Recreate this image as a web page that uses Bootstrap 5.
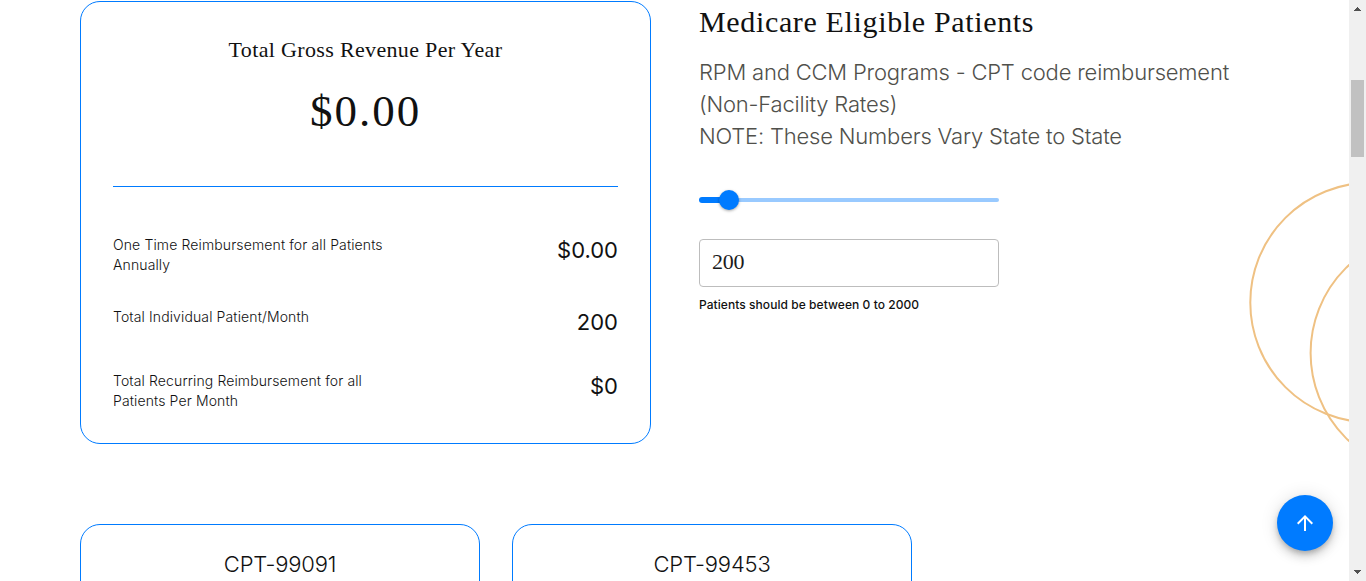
<!DOCTYPE html>
<html lang="en">
<head>
<meta charset="utf-8">
<meta name="viewport" content="width=device-width, initial-scale=1">
<title>Medicare Eligible Patients</title>
<link href="https://cdn.jsdelivr.net/npm/bootstrap@5.3.0/dist/css/bootstrap.min.css" rel="stylesheet">
<style>
body{height:581px;font-family:Inter,sans-serif;font-weight:300;color:#111}
.page-view{min-width:0;padding:1px 0 0 80px}
.serif{font-family:"Liberation Serif",serif;font-weight:400}
.outline-card{--bs-card-border-color:#007bff;--bs-card-border-radius:20px;--bs-card-bg:#fff;color:inherit}
.revenue{width:571px;height:443px;padding:32px}
.revenue-title{font-size:22px;line-height:32px;letter-spacing:.34px}
.revenue-total{font-size:45px;line-height:56px;letter-spacing:2px;margin-top:17px}
.rule{height:1px;background:#007bff;margin-top:47px}
.figures{margin-top:48px}
.figure-label{font-size:14px;line-height:20px;width:290px;letter-spacing:.125px}
.figure-value{font-size:22px;line-height:32px;font-weight:400;margin-top:-1px;margin-bottom:1px}
.calc{width:560px;margin-left:48px}
.calc-title{font-size:30px;line-height:40px;letter-spacing:.65px;padding-top:1px}
.calc-text{font-size:22px;line-height:32px;letter-spacing:-.19px;color:#50504b;margin-top:14px}
.slider{width:300px;height:20px;margin-top:38px}
.slider-fill{width:30px;height:6px;border-radius:3px;background:#007bff}
.slider-rest{height:4px;border-radius:0 2px 2px 0;background:#99caff}
.slider-thumb{width:20px;height:20px;margin:0 -10px;background:#007bff;z-index:1;box-shadow:0 1px 3px rgba(0,0,0,.35)}
.patients{width:300px;height:48px;margin-top:29px;padding:0 12px 2px;font-family:"Liberation Serif",serif;font-size:22px;letter-spacing:-.2px;color:#1b1b1b;border-color:#bdbdbd;border-radius:4px;font-weight:400}
.hint{font-size:12px;line-height:16px;font-weight:500;letter-spacing:.06px;margin-top:10px}
.codes{margin-top:80px;gap:32px}
.code-card{width:400px;height:300px;padding-top:23px;font-size:22px;line-height:32px;letter-spacing:-.2px}
.rings{right:0;top:180px}
.to-top{width:56px;height:56px;left:1277px;top:495px;background:#007bff;box-shadow:0 3px 5px -1px rgba(0,0,0,.2),0 6px 10px rgba(0,0,0,.14),0 1px 18px rgba(0,0,0,.12)}
.scroller{width:17px;background:#f0f0f0}
.scroller-thumb{width:13px;height:77px;background:#c1c1c1;margin:0 2px}
</style>
</head>
<body class="d-flex overflow-hidden bg-white">
<main class="page-view flex-grow-1 position-relative overflow-hidden">
  <svg class="rings position-absolute" width="101" height="264" viewBox="1248 180 101 264" fill="none" stroke="#efc183" stroke-width="2"><circle cx="1370" cy="302.5" r="119.7"/><circle cx="1430.6" cy="353" r="120"/></svg>
  <div class="d-flex align-items-start">
    <section class="card outline-card revenue">
      <h2 class="serif revenue-title text-center mb-0">Total Gross Revenue Per Year</h2>
      <div class="serif revenue-total text-center">$0.00</div>
      <div class="rule"></div>
      <div class="figures d-flex flex-column gap-4">
        <div class="d-flex justify-content-between pb-2"><div class="figure-label">One Time Reimbursement for all Patients Annually</div><div class="figure-value">$0.00</div></div>
        <div class="d-flex justify-content-between pb-2"><div class="figure-label">Total Individual Patient/Month</div><div class="figure-value">200</div></div>
        <div class="d-flex justify-content-between"><div class="figure-label">Total Recurring Reimbursement for all Patients Per Month</div><div class="figure-value">$0</div></div>
      </div>
    </section>
    <section class="calc">
      <h1 class="serif calc-title mb-0">Medicare Eligible Patients</h1>
      <p class="calc-text mb-0">RPM and CCM Programs - CPT code reimbursement (Non-Facility Rates)<br>NOTE: These Numbers Vary State to State</p>
      <div class="slider d-flex align-items-center"><div class="slider-fill"></div><div class="slider-thumb rounded-circle flex-shrink-0"></div><div class="slider-rest flex-grow-1"></div></div>
      <input class="form-control patients" type="text" value="200" aria-label="Patients">
      <div class="hint">Patients should be between 0 to 2000</div>
    </section>
  </div>
  <div class="codes d-flex">
    <div class="card outline-card code-card text-center">CPT-99091</div>
    <div class="card outline-card code-card text-center">CPT-99453</div>
  </div>
  <button class="to-top btn rounded-circle position-absolute d-flex align-items-center justify-content-center p-0 border-0" aria-label="Back to top"><svg width="24" height="24" viewBox="0 0 24 24" fill="#fff"><path d="M4 12l1.41 1.41L11 7.83V20h2V7.83l5.58 5.59L20 12l-8-8-8 8z"/></svg></button>
</main>
<aside class="scroller d-flex flex-column flex-shrink-0">
  <svg width="17" height="80" fill="#505050" shape-rendering="crispEdges"><path d="M5 11h7v-1h-1V9h-1V8H9V7H8v1H7v1H6v1H5z"/></svg>
  <div class="scroller-thumb"></div>
  <svg class="mt-auto" width="17" height="17" fill="#505050" shape-rendering="crispEdges"><path d="M5 6h7v1h-1v1h-1v1H9v1H8V9H7V8H6V7H5z"/></svg>
</aside>
<script src="https://cdn.jsdelivr.net/npm/bootstrap@5.3.0/dist/js/bootstrap.bundle.min.js"></script>
</body>
</html>
